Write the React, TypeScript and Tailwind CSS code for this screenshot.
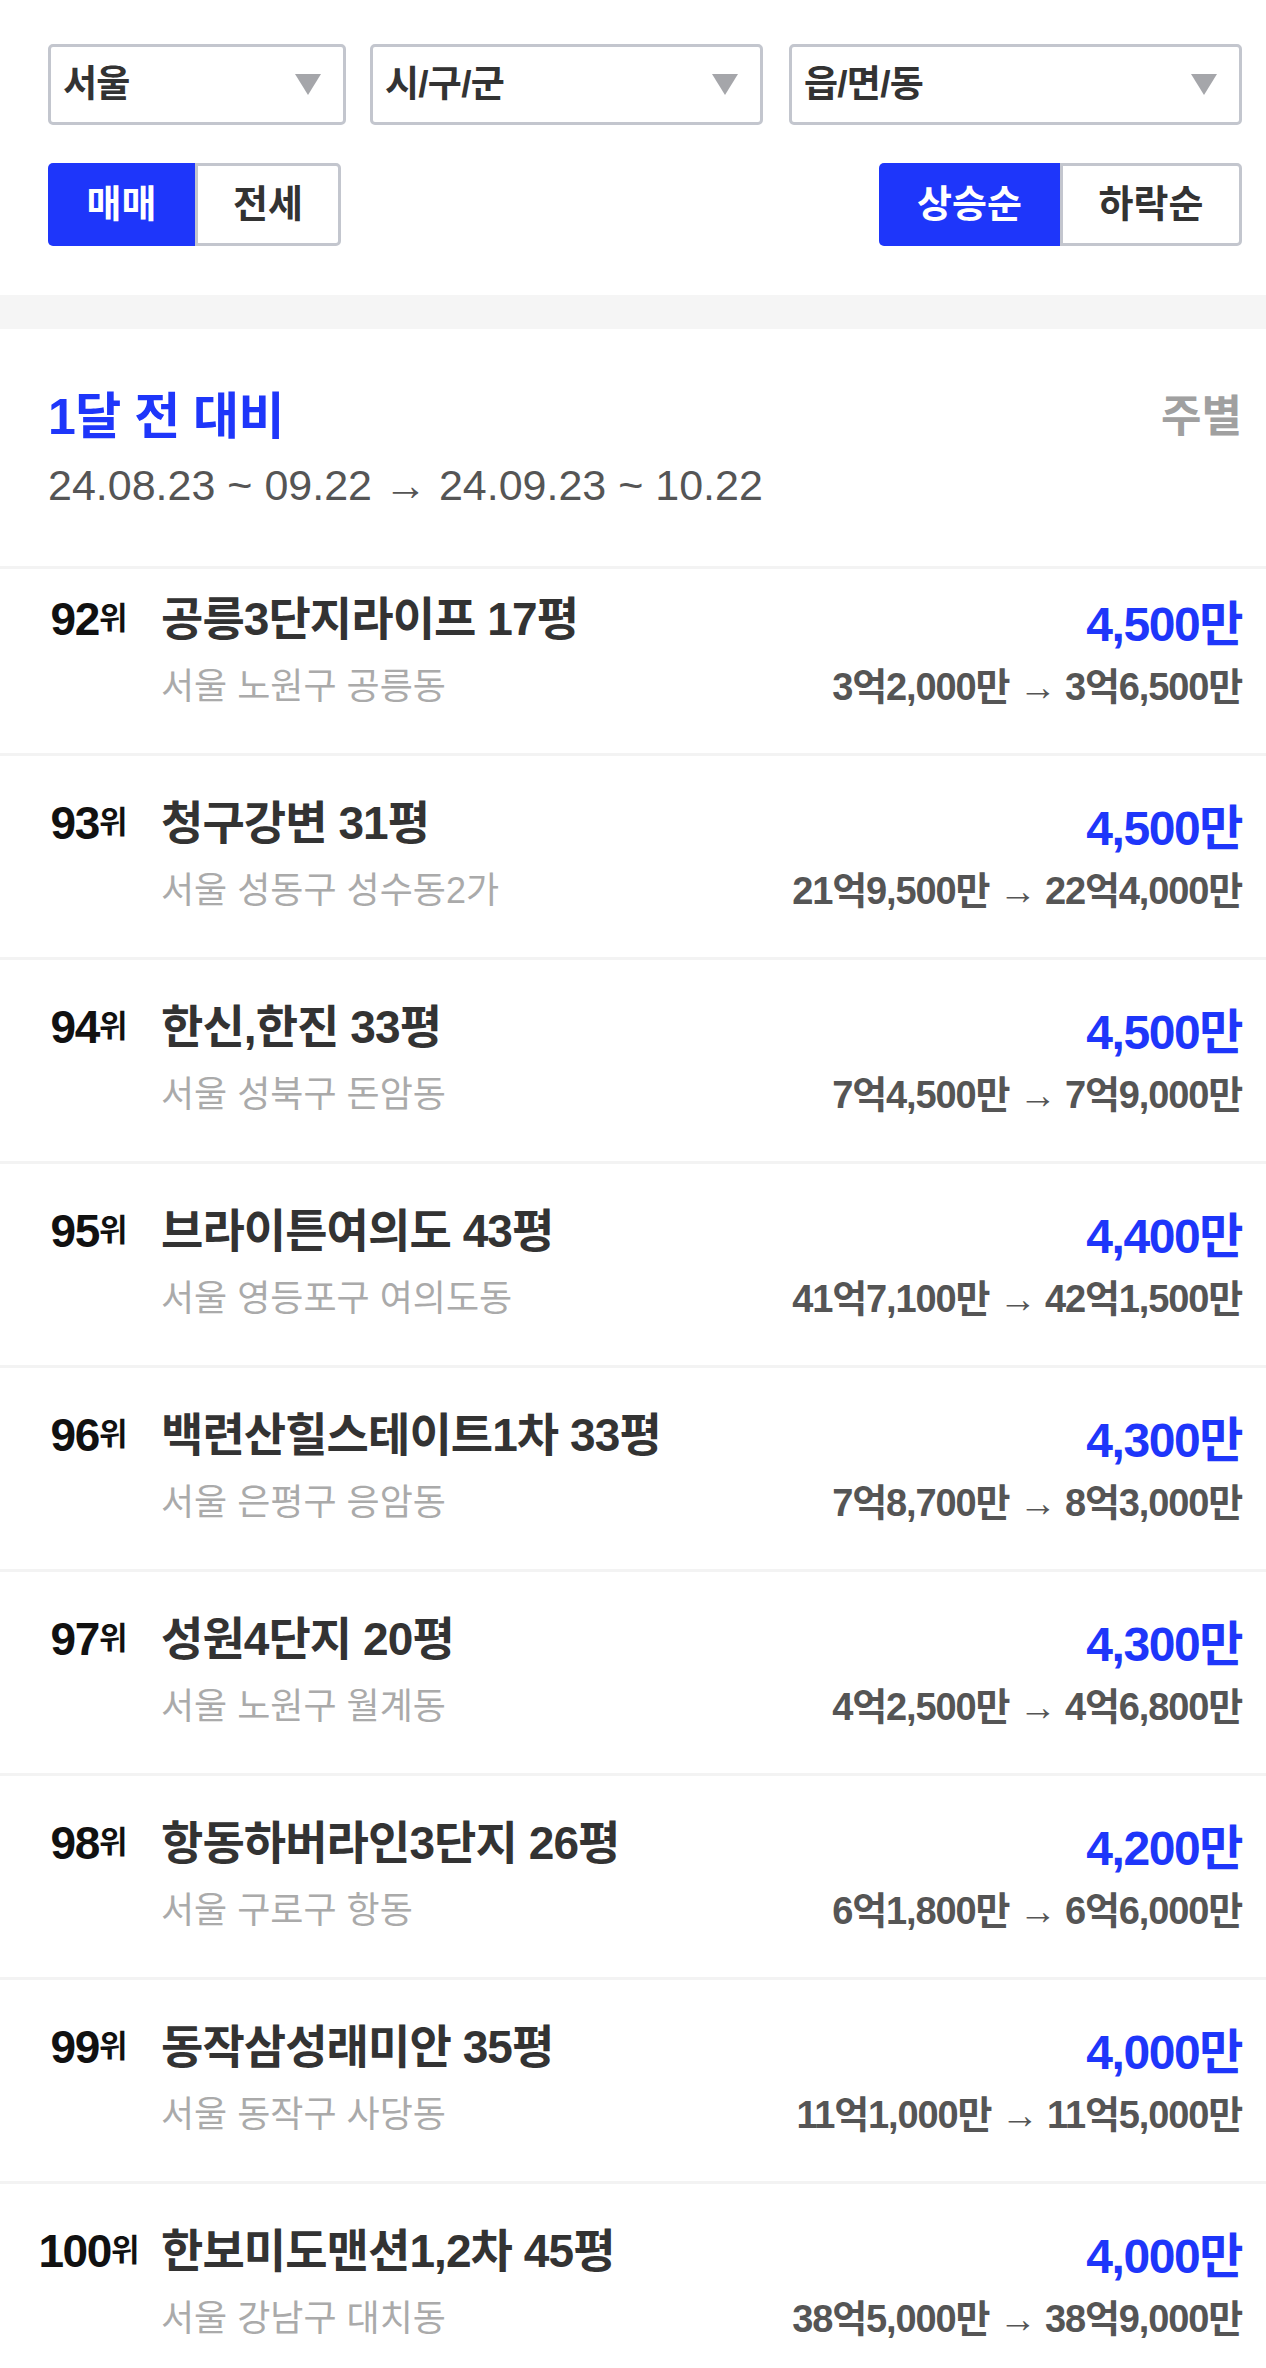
interface Row {
  rank: number
  name: string
  addr: string
  diff: string
  from: string
  to: string
}

const rows: Row[] = [
  { rank: 92, name: '공릉3단지라이프 17평', addr: '서울 노원구 공릉동', diff: '4,500만', from: '3억2,000만', to: '3억6,500만' },
  { rank: 93, name: '청구강변 31평', addr: '서울 성동구 성수동2가', diff: '4,500만', from: '21억9,500만', to: '22억4,000만' },
  { rank: 94, name: '한신,한진 33평', addr: '서울 성북구 돈암동', diff: '4,500만', from: '7억4,500만', to: '7억9,000만' },
  { rank: 95, name: '브라이튼여의도 43평', addr: '서울 영등포구 여의도동', diff: '4,400만', from: '41억7,100만', to: '42억1,500만' },
  { rank: 96, name: '백련산힐스테이트1차 33평', addr: '서울 은평구 응암동', diff: '4,300만', from: '7억8,700만', to: '8억3,000만' },
  { rank: 97, name: '성원4단지 20평', addr: '서울 노원구 월계동', diff: '4,300만', from: '4억2,500만', to: '4억6,800만' },
  { rank: 98, name: '항동하버라인3단지 26평', addr: '서울 구로구 항동', diff: '4,200만', from: '6억1,800만', to: '6억6,000만' },
  { rank: 99, name: '동작삼성래미안 35평', addr: '서울 동작구 사당동', diff: '4,000만', from: '11억1,000만', to: '11억5,000만' },
  { rank: 100, name: '한보미도맨션1,2차 45평', addr: '서울 강남구 대치동', diff: '4,000만', from: '38억5,000만', to: '38억9,000만' },
]

function Dropdown({ label, className }: { label: string; className: string }) {
  return (
    <div
      className={`flex h-[81px] items-center justify-between rounded-[5px] border-[3px] border-[#c3c6ce] bg-white pl-[12px] pr-[22px] ${className}`}
    >
      <span className="text-[37px] font-bold tracking-[-0.02em] text-[#333]">{label}</span>
      <svg width="26" height="21" viewBox="0 0 26 21" aria-hidden="true">
        <polygon points="0,0 26,0 13,21" fill="#a5a6aa" />
      </svg>
    </div>
  )
}

export default function App() {
  return (
    <div
      className="min-h-[2368px] w-full bg-white"
      style={{ fontFamily: '"Liberation Sans", "Noto Sans CJK KR", sans-serif' }}
    >
      {/* Filters */}
      <div className="pl-12 pr-6 pt-[44px] pb-[49px]">
        <div className="flex items-center">
          <Dropdown label="서울" className="w-[298px]" />
          <Dropdown label="시/구/군" className="ml-[24px] w-[393px]" />
          <Dropdown label="읍/면/동" className="ml-[26px] flex-1" />
        </div>
        <div className="mt-[38px] flex items-center justify-between">
          <div className="flex">
            <button className="h-[83px] w-[147px] rounded-l-[5px] bg-[#1e36fa] text-[38px] font-bold text-white">
              매매
            </button>
            <button className="h-[83px] w-[146px] rounded-r-[5px] border-[3px] border-[#c3c6ce] bg-white text-[38px] font-bold text-[#333]">
              전세
            </button>
          </div>
          <div className="flex">
            <button className="h-[83px] w-[181px] rounded-l-[5px] bg-[#1e36fa] text-[38px] font-bold text-white">
              상승순
            </button>
            <button className="h-[83px] w-[182px] rounded-r-[5px] border-[3px] border-[#c3c6ce] bg-white text-[38px] font-bold text-[#333]">
              하락순
            </button>
          </div>
        </div>
      </div>

      <div className="h-[34px] bg-[#f5f5f5]" />

      {/* Period header */}
      <div className="flex items-start justify-between pl-12 pr-6 pt-[60px] pb-[56px]">
        <div>
          <h2 className="text-[50px] leading-[56px] font-bold tracking-[-0.01em] text-[#1e36fa]">1달 전 대비</h2>
          <p className="mt-[15px] text-[43px] leading-[50px] text-[#555]">
            24.08.23 ~ 09.22 → 24.09.23 ~ 10.22
          </p>
        </div>
        <span className="text-[44px] leading-[56px] font-bold text-[#a0a0a0]">주별</span>
      </div>

      {/* Ranking list */}
      <ul>
        {rows.map((row, i) => (
          <li key={row.rank} className="border-t-[3px] border-[#f3f3f3]">
            <div className={`flex pl-[34px] pr-6 pb-[44px] ${i === 0 ? 'pt-[24px]' : 'pt-[41px]'}`}>
              <div className="flex h-[52px] w-[110px] shrink-0 items-center justify-center">
                <span className="text-[46px] font-bold tracking-[-0.03em] text-[#111]">{row.rank}</span>
                <span className="text-[31px] font-bold text-[#111]">위</span>
              </div>
              <div className="ml-[17px] min-w-0 flex-1">
                <p className="text-[46px] leading-[52px] font-bold tracking-[-0.02em] text-[#333]">{row.name}</p>
                <p className="mt-[20px] text-[36px] leading-[44px] text-[#aaa]">{row.addr}</p>
              </div>
              <div className="shrink-0 text-right">
                <p className="mt-[6px] text-[48px] leading-[52px] font-bold tracking-[-0.03em] text-[#1e36fa]">{row.diff}</p>
                <p className="mt-[14px] text-[38px] leading-[44px] font-bold tracking-[-0.03em] text-[#555]">
                  {row.from} <span className="font-normal">→</span> {row.to}
                </p>
              </div>
            </div>
          </li>
        ))}
      </ul>
    </div>
  )
}
